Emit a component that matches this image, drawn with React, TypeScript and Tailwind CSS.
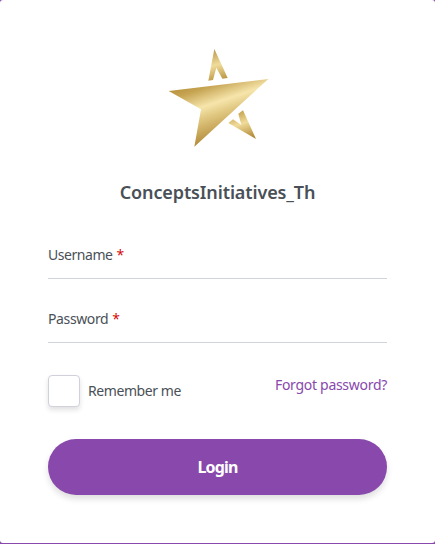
import React from "react";

function StarLogo() {
  return (
    <svg viewBox="0 0 360 345" className="h-[115px] w-[120px]" aria-hidden="true">
      <defs>
        <linearGradient id="goldTop" gradientUnits="userSpaceOnUse" x1="155" y1="28" x2="180" y2="122">
          <stop offset="0" stopColor="#b8964a" />
          <stop offset="0.5" stopColor="#f0dc9a" />
          <stop offset="1" stopColor="#b9953f" />
        </linearGradient>
        <linearGradient id="goldMain" gradientUnits="userSpaceOnUse" x1="125" y1="105" x2="187" y2="290">
          <stop offset="0" stopColor="#b48d38" />
          <stop offset="0.2" stopColor="#c5a351" />
          <stop offset="0.47" stopColor="#f6e5ab" />
          <stop offset="0.65" stopColor="#dfc67f" />
          <stop offset="1" stopColor="#b48d3b" />
        </linearGradient>
        <linearGradient id="goldBottom" gradientUnits="userSpaceOnUse" x1="233" y1="211" x2="262" y2="299">
          <stop offset="0" stopColor="#c09b45" />
          <stop offset="0.45" stopColor="#f0dc9a" />
          <stop offset="1" stopColor="#b08733" />
        </linearGradient>
      </defs>
      <path d="M163 27 203 114 187 116 169 83 159 120 145 122Z" fill="url(#goldTop)" />
      <path d="M26 153 325 117 103 320 123 208Z" fill="url(#goldMain)" />
      <path d="M249 211 288 297 205 249 219 238 244 255 235 221Z" fill="url(#goldBottom)" />
    </svg>
  );
}

function Field({ label, spacing }: { label: string; spacing: string }) {
  return (
    <label className="flex h-12 items-start gap-[4px] border-b border-[#ced4da] pt-[14px] text-[14px] leading-5">
      <span className={spacing}>{label}</span>
      <span className="font-['Open_Sans',sans-serif] text-[#d50000]">*</span>
    </label>
  );
}

export default function App() {
  return (
    <div className="h-[544px] w-[435px] bg-[#8848ac] pb-px font-['Noto_Sans',sans-serif] text-[#495057]">
      <main className="flex h-full flex-col rounded-[3px] bg-white px-12 pt-10">
        <div className="flex justify-center pl-[5px]">
          <StarLogo />
        </div>
        <h1 className="mt-[24px] text-center text-[18px] leading-[26px] font-semibold tracking-[-0.12px] whitespace-nowrap">
          ConceptsInitiatives_Th
        </h1>
        <form className="flex flex-col">
          <div className="mt-[26px] flex flex-col gap-4">
            <Field label="Username" spacing="tracking-[-0.45px]" />
            <Field label="Password" spacing="tracking-[-0.38px]" />
          </div>
          <div className="mt-8 flex h-8 items-start justify-between text-[14px] leading-5">
            <label className="flex items-center gap-2">
              <span className="size-8 rounded-[4px] border border-[#d1d1dc] bg-white shadow-[0_3px_5px_rgba(0,0,0,0.12)]" />
              <span className="tracking-[-0.42px]">Remember me</span>
            </label>
            <a className="tracking-[-0.29px] text-[#8848ac]">Forgot password?</a>
          </div>
          <button
            type="button"
            className="mt-8 h-14 rounded-full bg-[#8848ac] text-[16px] font-bold text-white shadow-[0_4px_6px_rgba(0,0,0,0.13)]"
          >
            <span className="tracking-[-0.8px]">Login</span>
          </button>
        </form>
      </main>
    </div>
  );
}
